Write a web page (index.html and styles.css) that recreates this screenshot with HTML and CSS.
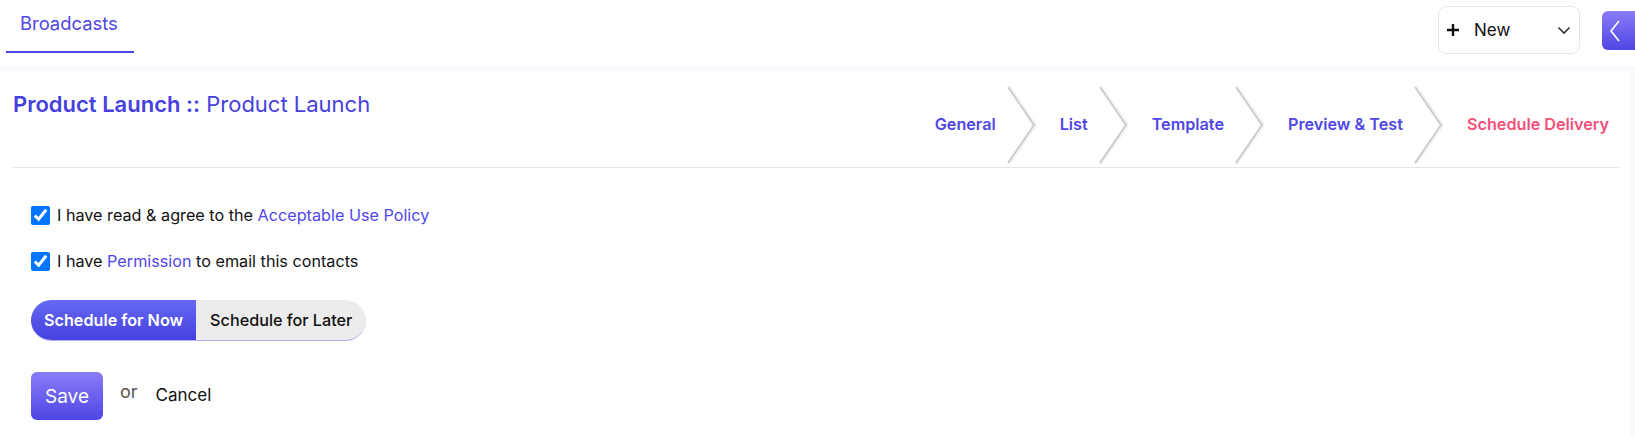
FILE: index.html
```html
<!DOCTYPE html>
<html>
<head>
<meta charset="utf-8">
<link rel="stylesheet" href="styles.css">
</head>
<body>
<header class="topbar">
  <nav class="tabs">
    <a class="tab active">Broadcasts</a>
  </nav>
  <div class="top-actions">
    <button class="new-btn">
      <svg class="plus" width="14" height="14" viewBox="0 0 14 14"><path d="M7 1v12M1 7h12" stroke="#111" stroke-width="2.4" stroke-linecap="butt"/></svg>
      <span class="new-label">New</span>
      <svg class="caret" width="14" height="9" viewBox="0 0 14 9"><path d="M1.5 1.5l5.5 5.5 5.5-5.5" fill="none" stroke="#333" stroke-width="1.6"/></svg>
    </button>
    <button class="collapse-btn">
      <svg width="14" height="24" viewBox="0 0 14 24"><path d="M11 2L3 12l8 10" fill="none" stroke="#fff" stroke-width="1.6"/></svg>
    </button>
  </div>
</header>
<main class="page">
  <section class="card">
    <div class="card-head">
      <h1 class="title"><strong>Product Launch ::</strong> Product Launch</h1>
      <ol class="steps">
        <li class="step"><span class="step-label">General</span><svg class="chev" width="32" height="78" viewBox="0 0 32 78"><polyline points="3,1 29,39 3,77" fill="none" stroke="#c9c9c9" stroke-width="1.6"/></svg></li>
        <li class="step"><span class="step-label">List</span><svg class="chev" width="32" height="78" viewBox="0 0 32 78"><polyline points="3,1 29,39 3,77" fill="none" stroke="#c9c9c9" stroke-width="1.6"/></svg></li>
        <li class="step"><span class="step-label">Template</span><svg class="chev" width="32" height="78" viewBox="0 0 32 78"><polyline points="3,1 29,39 3,77" fill="none" stroke="#c9c9c9" stroke-width="1.6"/></svg></li>
        <li class="step"><span class="step-label">Preview &amp; Test</span><svg class="chev" width="32" height="78" viewBox="0 0 32 78"><polyline points="3,1 29,39 3,77" fill="none" stroke="#c9c9c9" stroke-width="1.6"/></svg></li>
        <li class="step current"><span class="step-label">Schedule Delivery</span></li>
      </ol>
    </div>
    <div class="card-body">
      <label class="check-row"><input type="checkbox" checked> <span>I have read &amp; agree to the <a class="link">Acceptable Use Policy</a></span></label>
      <label class="check-row second"><input type="checkbox" checked> <span>I have <a class="link">Permission</a> to email this contacts</span></label>
      <div class="segmented">
        <button class="seg active">Schedule for Now</button>
        <button class="seg">Schedule for Later</button>
      </div>
      <div class="actions">
        <button class="save-btn">Save</button>
        <span class="or">or</span>
        <a class="cancel">Cancel</a>
      </div>
    </div>
  </section>
</main>
</body>
</html>
```

FILE: styles.css
```css
* { box-sizing: border-box; }
html, body { margin: 0; padding: 0; }
body {
  font-family: Inter, "Noto Sans", "Liberation Sans", sans-serif;
  background: #f8f8fe;
  color: #111;
  overflow: hidden;
  width: 1635px;
  height: 437px;
}
button { font-family: inherit; cursor: pointer; }
a { cursor: pointer; }

.topbar {
  height: 66px;
  background: #fff;
  display: flex;
  justify-content: space-between;
  align-items: flex-start;
}
.tabs { display: flex; padding-left: 6px; }
.tab {
  display: block;
  width: 128px;
  padding: 12px 0 0 14px;
  height: 53px;
  font-size: 18.4px;
  color: #4f46e5;
  border-bottom: 2px solid #4f46e5;
}
.top-actions {
  display: flex;
  align-items: flex-start;
  padding-top: 6px;
  margin-right: -7px;
}
.new-btn {
  width: 142px;
  height: 48px;
  background: #fff;
  border: 1px solid #e7e7ea;
  border-radius: 8px;
  display: flex;
  align-items: center;
  padding: 0 8px 0 7px;
  font-size: 17px;
  color: #111;
}
.plus { flex: none; }
.new-label { margin-left: 14px; flex: 1; text-align: left; }
.caret { flex: none; }
.collapse-btn {
  margin: 5px 0 0 22px;
  width: 40px;
  height: 39px;
  border: none;
  border-radius: 6px 0 0 6px;
  background: linear-gradient(180deg, #8c7cf7 0%, #4f46e5 100%);
  display: flex;
  align-items: center;
  padding: 0 0 0 6px;
}

.page { padding: 6px 4px 0 0; }
.card {
  background: #fff;
  height: 365px;
  padding: 0 12px 0 13px;
}
.card-head {
  display: flex;
  justify-content: space-between;
  align-items: flex-start;
  border-bottom: 1px solid #e5e5e8;
  padding-top: 14px;
  height: 96px;
}
.title {
  margin: 5px 0 0;
  font-size: 22px;
  line-height: 26px;
  font-weight: 400;
  color: #4640de;
}
.title strong { font-weight: 600; }
.steps {
  list-style: none;
  margin: 0;
  padding: 0 10px 0 0;
  display: flex;
  height: 78px;
}
.step {
  display: flex;
  align-items: center;
  padding-left: 23px;
}
.step:first-child { padding-left: 0; }
.step-label {
  font-size: 16.2px;
  font-weight: 600;
  color: #4f46e5;
  margin-right: 9px;
  margin-bottom: 3px;
}
.step.current .step-label { color: #f4507a; margin-right: 0; }
.chev { filter: drop-shadow(1px 0 1px rgba(0,0,0,0.14)); }

.card-body { padding: 37px 0 0 18px; }
.check-row {
  display: flex;
  align-items: center;
  font-size: 16.2px;
  height: 20px;
  gap: 7px;
}
.check-row.second { margin-top: 26px; }
.check-row input {
  margin: 0;
  width: 19px;
  height: 19px;
}
.link { color: #5146e8; }

.segmented {
  display: inline-flex;
  margin-top: 29px;
  height: 41px;
  border-radius: 21px;
  overflow: hidden;
  background: #ececec;
  border-bottom: 1px solid #b6b0f5;
}
.seg {
  border: none;
  background: transparent;
  font-size: 16.2px;
  font-weight: 500;
  color: #111;
  padding: 0 14px;
}
.seg.active {
  background: linear-gradient(180deg, #6569f2 0%, #4540e0 100%);
  color: #fff;
  font-weight: 600;
  padding: 0 13px 0 13px;
}

.actions {
  display: flex;
  align-items: center;
  margin-top: 31px;
}
.save-btn {
  width: 72px;
  height: 48px;
  border: none;
  border-radius: 6px;
  background: linear-gradient(180deg, #8a7cf6 0%, #4f46e5 100%);
  color: #fff;
  font-size: 19px;
}
.or {
  margin: 0 0 10px 17px;
  font-size: 18px;
  color: #555;
}
.cancel {
  margin-left: 18px;
  margin-bottom: 2px;
  font-size: 17px;
  color: #111;
}
```
